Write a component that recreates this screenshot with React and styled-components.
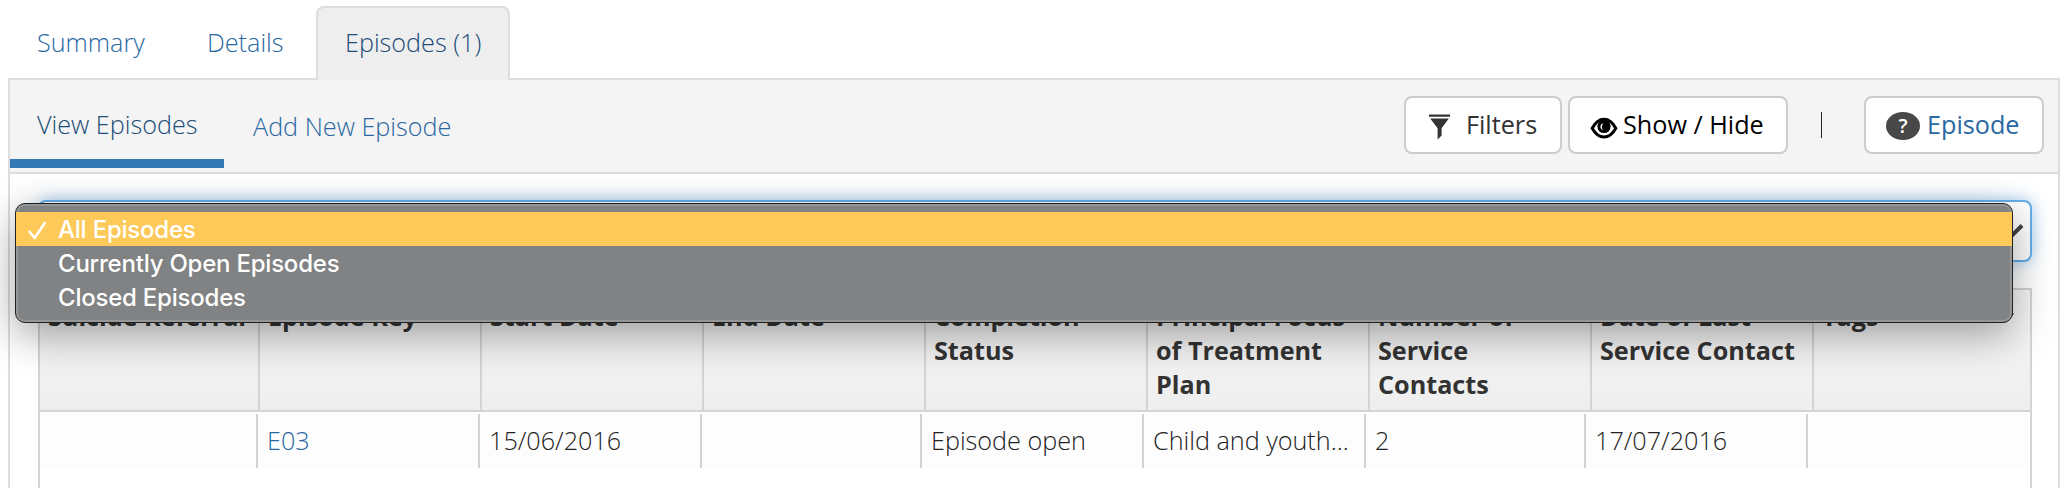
import React from 'react';
import styled, { createGlobalStyle } from 'styled-components';

const Global = createGlobalStyle`
  *{box-sizing:border-box}
  body{margin:0;background:#fff;color:#333;font:300 25.2px/36px "Open Sans",sans-serif;overflow:hidden}
`;
const LINK = '#2a68a2';
const LINK_ACTIVE = '#204d78';

const Page = styled.div`height:488px;overflow:hidden;padding:6px 12px 0 8px;position:relative;`;
const Tabs = styled.nav`display:flex;height:74px;margin-bottom:-2px;position:relative;`;
const Tab = styled.a`
  color:${p => (p.$active ? LINK_ACTIVE : LINK)};
  padding:16px 0 0 27px;border:2px solid ${p => (p.$active ? '#ddd' : 'transparent')};border-bottom:0;
  border-radius:8px 8px 0 0;background:${p => (p.$active ? '#eee' : 'transparent')};
  width:${p => p.$w}px;white-space:nowrap;
`;
const Panel = styled.section`border:2px solid #ddd;border-bottom:0;height:420px;`;
const SubNav = styled.div`display:flex;height:94px;background:#f4f4f4;border-bottom:2px solid #ddd;padding-right:14px;`;
const SubLink = styled.a`
  height:88px;margin-top:-1px;white-space:nowrap;color:${p => (p.$active ? LINK_ACTIVE : LINK)};
  padding:${p => (p.$active ? '27px 0 0 27px' : '29px 29px 0')};
  width:${p => (p.$active ? '214px' : 'auto')};
  ${p => p.$active && 'height:89px;border-bottom:9px solid #337ab7;'}
`;
const Actions = styled.div`display:flex;margin:16px 0 0 auto;height:58px;align-items:stretch;`;
const Button = styled.button`
  font:400 25.2px/36px "Open Sans",sans-serif;color:${p => p.$color};width:${p => p.$w}px;
  background:#fff;border:2px solid #ccc;border-radius:8px;padding:0 0 2px ${p => p.$pl}px;margin-left:${p => p.$ml || 0}px;
  display:flex;align-items:center;gap:${p => p.$gap}px;white-space:nowrap;
`;
const Divider = styled.i`width:1px;height:26px;background:#222;margin:16px 42px 0 33px;`;
const Help = styled.span`
  width:34px;height:28px;margin-top:4px;border-radius:50%;background:#484848;color:#fff;
  font:600 20px/28px "Open Sans",sans-serif;text-align:center;
`;
const Content = styled.div`padding:26px 26px 0 28px;`;
const Select = styled.div`
  height:62px;border:2px solid #66afe9;border-radius:8px;background:#fff;
  box-shadow:0 0 16px rgba(102,175,233,.6);display:flex;align-items:center;justify-content:flex-end;padding-right:6px;
`;
const Grid = styled.div`margin-top:26px;border:2px solid #d4d4d4;border-bottom:0;height:220px;`;
const Head = styled.div`display:flex;height:122px;border-bottom:2px solid #d4d4d4;background:linear-gradient(#f8f8f8,#eee);`;
const HeadCell = styled.div`
  flex:none;width:${p => p.$w}px;border-right:${p => (p.$last ? 0 : 2)}px solid #d4d4d4;padding:9px 0 0 8px;
  font-weight:700;line-height:34px;white-space:pre-line;position:relative;
`;
const HeadMenu = styled.svg`position:absolute;right:16px;top:21px;`;
const Row = styled.div`display:flex;height:54px;margin:2px 2px 0 0;background:#fdfdfd;`;
const Cell = styled.div`
  flex:none;width:${p => p.$w}px;border-right:${p => (p.$last ? 0 : 2)}px solid #d4d4d4;padding:9px 0 0 9px;
  color:${p => (p.$link ? LINK : '#222')};white-space:nowrap;line-height:34px;
`;
const Menu = styled.div`
  position:absolute;left:15px;top:203px;width:1998px;height:120px;border-radius:10px;
  box-shadow:0 12px 40px rgba(0,0,0,.36);
`;
const MenuList = styled.div`
  height:100%;padding:8px 0;border:1px solid #1f2123;border-radius:10px;background:#808283;overflow:hidden;
  box-shadow:inset 0 0 0 2px rgba(255,255,255,.16);
`;
const Option = styled.div`
  height:34px;display:flex;align-items:center;padding-left:11px;color:#fff;
  font:500 24px/34px Inter,sans-serif;background:${p => (p.$active ? '#fdc959' : 'transparent')};
`;
const Mark = styled.span`width:31px;display:flex;align-items:center;`;
const Label = styled.span`letter-spacing:-.22px;padding-top:2px;`;

const columns = [
  ['Suicide Referral', 220, '', 218],
  ['Episode Key', 222, 'E03', 222],
  ['Start Date', 222, '15/06/2016', 222],
  ['End Date', 222, '', 220],
  ['Completion\nStatus', 222, 'Episode open', 222],
  ['Principal Focus\nof Treatment\nPlan', 222, 'Child and youth...', 222],
  ['Number of\nService\nContacts', 222, '2', 220],
  ['Date of Last\nService Contact', 222, '17/07/2016', 222],
  ['Tags', 216, '', 220],
];

const FilterIcon = () => (
  <svg width="22" height="26" viewBox="0 0 22 26" fill="#333" style={{ marginTop: 6 }}>
    <path d="M0 .6h21v2.2H0zM1.2 4.6h18.6l-7.2 9.6v7.2l-4 4V14.2z" />
  </svg>
);
const EyeIcon = () => (
  <svg width="28" height="24" viewBox="0 0 28 24" style={{ marginTop: 7 }}>
    <path d="M2.2 12.2C5.5 6 9.5 3.2 14 3.2s8.500 2.800 11.800 9C22.500 18.200 18.500 21 14 21S5.500 18.200 2.200 12.200z" fill="none" stroke="#000" strokeWidth="3" />
    <circle cx="14" cy="10.500" r="6.600" />
    <path d="M13.600 7.200q-3.400 .6-3.200 4.200.4 2.600 3.200 2.400-2.400-1.200-1.800-3.400.4-1.800 1.800-3.200z" fill="#fff" />
  </svg>
);
const Chevron = () => (
  <svg width="22" height="14" viewBox="0 0 22 14"><path d="M1 1.500l9.500 9.500L20 1.500" fill="none" stroke="#444" strokeWidth="4" /></svg>
);
const Check = () => (
  <svg width="20" height="20" viewBox="0 0 20 20" overflow="visible">
    <path d="M2.500 12.700L7.600 19 17.800 4" fill="none" stroke="#fff" strokeWidth="2.600" strokeLinecap="round" strokeLinejoin="round" />
  </svg>
);

export default function App() {
  return (
    <Page>
      <Global />
      <Tabs>
        <Tab $w={170}>Summary</Tab>
        <Tab $w={138}>Details</Tab>
        <Tab $w={194} $active>Episodes (1)</Tab>
      </Tabs>
      <Panel>
        <SubNav>
          <SubLink $active>View Episodes</SubLink>
          <SubLink>Add New Episode</SubLink>
          <Actions>
            <Button $w={158} $pl={23} $gap={15} $color="#333"><FilterIcon />Filters</Button>
            <Button $w={220} $pl={20} $gap={5} $ml={6} $color="#000"><EyeIcon />Show / Hide</Button>
            <Divider />
            <Button $w={180} $pl={20} $gap={7} $color={LINK}><Help>?</Help>Episode</Button>
          </Actions>
        </SubNav>
        <Content>
          <Select><Chevron /></Select>
          <Grid>
            <Head>
              {columns.map(([t, w], i) => (
                <HeadCell key={t} $w={w} $last={i === 8}>
                  {t}
                  {i === 8 && (
                    <HeadMenu width="18" height="12" viewBox="0 0 18 12">
                      <path d="M1 2l8 8 8-8" fill="none" stroke="#222" strokeWidth="2.500" />
                    </HeadMenu>
                  )}
                </HeadCell>
              ))}
            </Head>
            <Row>
              {columns.map(([t, , v, w], i) => <Cell key={t} $w={w} $last={i === 8} $link={i === 1}>{v}</Cell>)}
            </Row>
          </Grid>
        </Content>
      </Panel>
      <Menu>
        <MenuList>
          <Option $active><Mark><Check /></Mark><Label>All Episodes</Label></Option>
          <Option><Mark /><Label>Currently Open Episodes</Label></Option>
          <Option><Mark /><Label>Closed Episodes</Label></Option>
        </MenuList>
      </Menu>
    </Page>
  );
}
